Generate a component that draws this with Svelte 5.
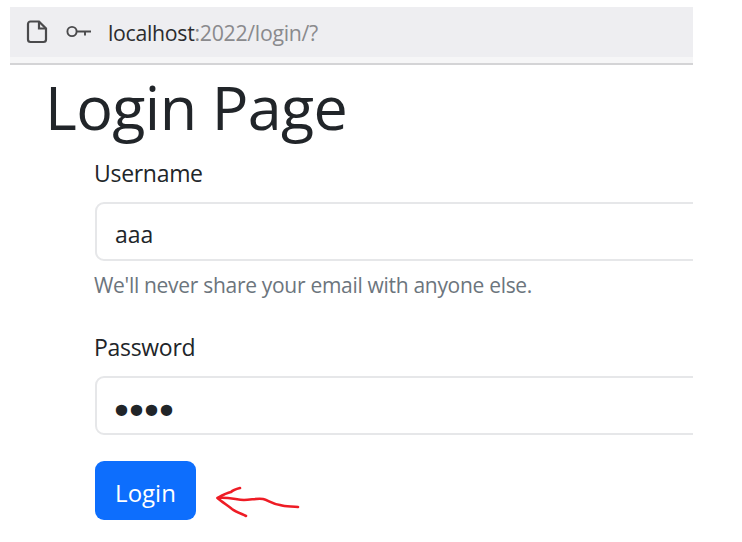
<script lang="ts">
  let username = $state('aaa');
  let password = $state('aaaa');
</script>

<div class="shot">
  <div class="browser-bar">
    <svg class="page-icon" width="22" height="24" viewBox="0 0 22 24" fill="none" stroke="#4a4a4c" stroke-width="2.2" aria-hidden="true">
      <path d="M4.5 1.5H13L20 8.5V19.5A2.5 2.5 0 0 1 17.5 22H4.5A2.5 2.5 0 0 1 2 19.5V4A2.5 2.5 0 0 1 4.5 1.5Z" />
      <path d="M13 1.5V8.5H20" />
    </svg>
    <svg class="key-icon" width="26" height="14" viewBox="0 0 26 14" fill="none" stroke="#4a4a4c" stroke-width="1.9" aria-hidden="true">
      <circle cx="6" cy="6.5" r="4.6" />
      <path d="M10.6 6.5H25M19 6.5V10.5" />
    </svg>
    <span class="url"><span class="host">localhost</span>:2022/login/?</span>
  </div>

  <h1>Login Page</h1>

  <form>
    <div class="field">
      <label for="username">Username</label>
      <input id="username" type="text" bind:value={username} />
      <small>We'll never share your email with anyone else.</small>
    </div>

    <div class="field">
      <label for="password">Password</label>
      <input id="password" class="secret" type="password" bind:value={password} />
    </div>

    <div class="actions">
      <button type="button">Login</button>
      <svg class="arrow" width="90" height="36" viewBox="0 0 90 36" fill="none" stroke="#ee1c25" stroke-width="2.6" stroke-linecap="round" stroke-linejoin="round" aria-hidden="true">
        <path d="M24 4C20 5 17 6 15 8C10 9 5 12 1.5 14C6 18 11 21 16 25C20 28 26 30 30 32" />
        <path d="M2 14C10 13 18 15 28 16C35 16 41 14 47 15C52 16 56 20 64 21C70 23 76 22 82 23" />
      </svg>
    </div>
  </form>
</div>

<style>
  :global(body) {
    background: #fff;
    font-family: "Open Sans", "Noto Sans", sans-serif;
    color: #212529;
  }

  .shot {
    width: 683px;
    height: 542px;
    margin-left: 10px;
    padding-top: 7px;
    box-sizing: border-box;
    overflow: hidden;
  }

  .browser-bar {
    display: flex;
    align-items: center;
    height: 50px;
    padding-left: 16px;
    padding-bottom: 6px;
    background: #eeeef1;
    border-bottom: 2px solid #d4d4d6;
    box-shadow: inset 0 -6px 0 #f6f6f7;
  }

  .page-icon {
    flex: none;
    margin-right: 18px;
  }

  .key-icon {
    flex: none;
    margin-right: 16px;
  }

  .url {
    font-size: 21.3px;
    color: #8a8a8d;
    letter-spacing: -0.3px;
  }

  .host {
    color: #2c2c2e;
  }

  h1 {
    margin: -2px 0 5px 35px;
    font-size: 61px;
    font-weight: 400;
    line-height: 88px;
    letter-spacing: -0.6px;
    color: #212529;
  }

  form {
    margin-left: 85px;
  }

  .field {
    display: flex;
    flex-direction: column;
    margin-bottom: 26px;
  }

  label {
    margin-left: -1px;
    margin-bottom: 12px;
    font-size: 23px;
    line-height: 34px;
    letter-spacing: -0.3px;
  }

  input {
    width: 100%;
    min-width: 700px;
    height: 59px;
    box-sizing: border-box;
    padding: 4px 18px 0;
    border: 2px solid #e6e7e9;
    border-radius: 9px;
    background: #fff;
    color: #212529;
    font: inherit;
    font-size: 23px;
    outline: none;
  }

  .secret {
    padding: 12px 18px 0 13px;
    font-family: "DejaVu Sans", sans-serif;
    font-size: 39px;
    letter-spacing: -8px;
  }

  small {
    margin-top: 5px;
    margin-left: -1px;
    font-size: 21px;
    line-height: 38px;
    color: #6c757d;
    letter-spacing: -0.3px;
  }

  .actions {
    display: flex;
    align-items: flex-start;
    gap: 20px;
  }

  button {
    width: 101px;
    height: 59px;
    padding: 3px 0 0;
    border: none;
    border-radius: 9px;
    background: #0d6efd;
    color: #fff;
    font: inherit;
    font-size: 24px;
  }

  .arrow {
    flex: none;
    margin-top: 23px;
  }
</style>
